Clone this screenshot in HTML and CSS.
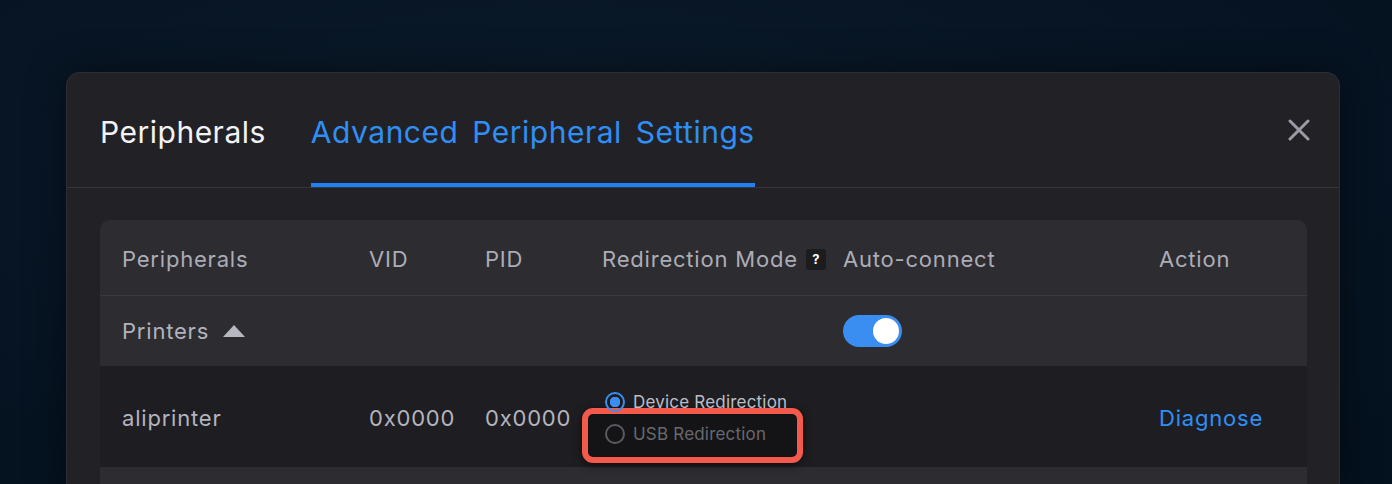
FILE: index.html
```html
<!DOCTYPE html>
<html lang="en">
<head>
  <meta charset="UTF-8">
  <meta name="viewport" content="width=device-width, initial-scale=1.0">
  <title>Advanced Peripheral Settings</title>
  <link rel="stylesheet" href="styles.css">
</head>
<body>
  <div class="page">
    <div class="modal">
      <div class="modal-head">
        <div class="tabs">
          <div class="tab">Peripherals</div>
          <div class="tab active">Advanced Peripheral Settings</div>
        </div>
        <button class="close" aria-label="Close">
          <svg width="22" height="22" viewBox="0 0 22 22">
            <path d="M2 2 L20 20 M20 2 L2 20" stroke="#9b9ba6" stroke-width="3" stroke-linecap="round"/>
          </svg>
        </button>
      </div>

      <div class="modal-body">
        <div class="table">
          <div class="row head">
            <div class="cell">Peripherals</div>
            <div class="cell">VID</div>
            <div class="cell">PID</div>
            <div class="cell">Redirection Mode <span class="help">?</span></div>
            <div class="cell">Auto-connect</div>
            <div class="cell">Action</div>
          </div>

          <div class="row group">
            <div class="cell">Printers <span class="caret"></span></div>
            <div class="cell"></div>
            <div class="cell"></div>
            <div class="cell"></div>
            <div class="cell"><span class="switch on"><span class="knob"></span></span></div>
            <div class="cell"></div>
          </div>

          <div class="row device">
            <div class="cell">aliprinter</div>
            <div class="cell">0x0000</div>
            <div class="cell">0x0000</div>
            <div class="cell modes">
              <span class="mark"></span>
              <label class="radio checked"><span class="dot"></span>Device Redirection</label>
              <label class="radio disabled"><span class="dot"></span>USB Redirection</label>
            </div>
            <div class="cell"></div>
            <div class="cell"><a class="link" href="#">Diagnose</a></div>
          </div>

          <div class="row filler"></div>
        </div>
      </div>
    </div>
  </div>
</body>
</html>
```

FILE: styles.css
```css
body {
  margin: 0;
  height: 484px;
  overflow: hidden;
  font-family: Inter, 'Liberation Sans', Arial, sans-serif;
  background: radial-gradient(ellipse at 40% 30%, #0b1a2a 0%, #061423 60%, #04111e 100%);
}

.page {
  padding: 72px 52px 0 66px;
}

/* Dialog */
.modal {
  background: #222226;
  border: 1px solid #2d2d33;
  border-bottom: none;
  border-radius: 14px 14px 0 0;
  box-shadow: 0 0 40px rgba(0, 0, 0, 0.45);
  height: 420px;
}

.modal-head {
  display: flex;
  justify-content: space-between;
  height: 114px;
  padding: 0 29px 0 33px;
  border-bottom: 1px solid #36363b;
}

.tabs {
  display: flex;
  gap: 45px;
}

.tab {
  font-size: 30px;
  letter-spacing: 0.5px;
  word-spacing: 5px;
  line-height: 40px;
  padding-top: 39px;
  color: #f3f3f6;
  border-bottom: 4px solid transparent;
  white-space: nowrap;
}

.tab.active {
  color: #2f8ff6;
  border-bottom-color: #1f80f5;
}

.close {
  background: none;
  border: none;
  padding: 0;
  margin-top: 46px;
  width: 22px;
  height: 22px;
  cursor: pointer;
}

.modal-body {
  padding: 32px 32px 0 33px;
}

/* Table card */
.table {
  background: #2c2c31;
  border-radius: 10px 10px 0 0;
  overflow: hidden;
}

.row {
  display: grid;
  grid-template-columns: 247px 116px 117px 241px 316px 1fr;
  align-items: center;
}

.cell {
  padding-left: 22px;
  font-size: 22px;
  letter-spacing: 0.8px;
  color: #b2b2bc;
  white-space: nowrap;
  display: flex;
  align-items: center;
}

.row.head {
  height: 75px;
  border-bottom: 1px solid #3a3a40;
}

.row.head .cell {
  color: #acacb7;
  padding-top: 3px;
}

.help {
  flex-shrink: 0;
  display: inline-flex;
  align-items: center;
  justify-content: center;
  width: 20px;
  height: 21px;
  margin-left: 8px;
  background: #1c1c1f;
  border-radius: 3px;
  color: #fff;
  font-size: 13px;
  font-weight: 700;
  letter-spacing: 0;
}

.row.group {
  height: 70px;
}

.caret {
  width: 0;
  height: 0;
  margin-left: 14px;
  border-left: 11px solid transparent;
  border-right: 11px solid transparent;
  border-bottom: 12px solid #b8b8c2;
}

.switch {
  position: relative;
  display: inline-block;
  width: 59px;
  height: 32px;
  border-radius: 16px;
  background: #3a8ef1;
}

.switch .knob {
  position: absolute;
  top: 3px;
  right: 3px;
  width: 26px;
  height: 26px;
  border-radius: 50%;
  background: #fff;
}

.row.device {
  height: 101px;
  background: #1e1e22;
}

.row.device .cell {
  color: #b4b4be;
  padding-top: 2px;
}

.cell.modes {
  position: relative;
  flex-direction: column;
  align-items: flex-start;
  gap: 10px;
  padding-left: 25px;
  padding-top: 0;
}

.radio {
  position: relative;
  display: flex;
  align-items: center;
  gap: 8px;
  font-size: 17px;
  letter-spacing: 0.2px;
  line-height: 22px;
  color: #bdbdc5;
}

.radio .dot {
  box-sizing: border-box;
  width: 20px;
  height: 20px;
  border-radius: 50%;
  border: 2px solid #5a5a60;
}

.radio.checked .dot {
  border-color: #3a8ef1;
  background: radial-gradient(circle, #3a8ef1 0 5px, transparent 5.5px);
}

.radio.disabled {
  color: #68686f;
}

/* annotation frame over the USB option */
.mark {
  position: absolute;
  left: 2px;
  top: 19px;
  width: 221px;
  height: 55px;
  box-sizing: border-box;
  border: 6px solid #f35a4b;
  border-radius: 11px;
  background: #141417;
  box-shadow: 0 2px 8px rgba(0, 0, 0, 0.6);
}

.link {
  color: #2f8ff6;
  text-decoration: none;
}

.row.filler {
  height: 40px;
}
```
